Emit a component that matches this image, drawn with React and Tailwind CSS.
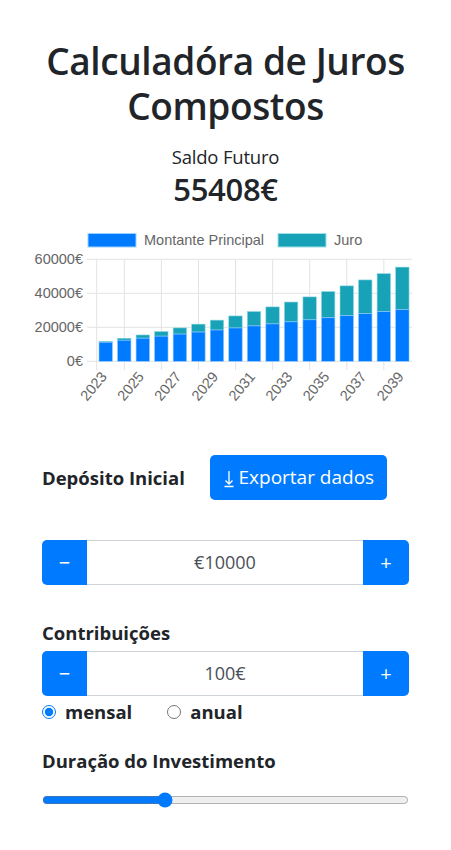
import { useState } from "react";

const BLUE = "#007bff";
const TEAL = "#17a2b8";

function yearData(years) {
  const i = 0.05 / 12;
  const rows = [];
  for (let n = 1; n <= years; n++) {
    const g = Math.pow(1 + i, 12 * n);
    const total = 10000 * g + (100 * (g - 1)) / i;
    rows.push({ year: 2022 + n, principal: 10000 + 1200 * n, total });
  }
  return rows;
}

function Chart({ rows }) {
  const y0 = 361.3;
  const pxPer = 102 / 60000;
  const x0 = 105.7;
  const step = 18.54;
  const bw = 13.4;
  const grid = [0, 20000, 40000, 60000];
  return (
    <svg width="451" height="192" viewBox="0 228 451 192" className="block -mx-[42px]">
      {/* legend */}
      <rect x="88" y="233.5" width="48" height="13.5" fill={BLUE} stroke="#9fd0ff" strokeWidth="1" />
      <text x="144" y="245" fontSize="14.5" fill="#666" fontFamily="'Liberation Sans', Arial, sans-serif">
        Montante Principal
      </text>
      <rect x="278" y="233.5" width="48" height="13.5" fill={TEAL} stroke="#9fe0ea" strokeWidth="1" />
      <text x="334" y="245" fontSize="14.5" fill="#666" fontFamily="'Liberation Sans', Arial, sans-serif">
        Juro
      </text>

      {/* grid */}
      {grid.map((v) => {
        const y = y0 - v * pxPer;
        return (
          <g key={v}>
            <line x1="87" x2="412" y1={y} y2={y} stroke="#e3e3e3" />
            <text
              x="83"
              y={y + 5}
              textAnchor="end"
              fontSize="14.5"
              fill="#666"
              fontFamily="'Liberation Sans', Arial, sans-serif"
            >
              {v}€
            </text>
          </g>
        );
      })}
      <line x1="96.7" x2="96.7" y1="259.3" y2="370" stroke="#e3e3e3" />
      {[0, 1, 2, 3, 4, 5, 6, 7].map((k) => (
        <line key={k} x1={124.3 + 37.08 * k} x2={124.3 + 37.08 * k} y1="259.3" y2="370" stroke="#e3e3e3" />
      ))}

      {/* bars */}
      {rows.map((r, idx) => {
        const cx = x0 + step * idx;
        const hp = r.principal * pxPer;
        const ht = r.total * pxPer;
        return (
          <g key={r.year}>
            <rect x={cx - bw / 2} y={y0 - ht} width={bw} height={ht - hp} fill={TEAL} stroke="#8fd6e2" strokeWidth="0.6" />
            <rect x={cx - bw / 2} y={y0 - hp} width={bw} height={hp} fill={BLUE} stroke="#8cc6ff" strokeWidth="0.6" />
          </g>
        );
      })}

      {/* x labels */}
      {rows
        .filter((_, idx) => idx % 2 === 0)
        .map((r, k) => {
          const tx = x0 + 2 * step * k + 2;
          const ty = 377;
          return (
            <text
              key={r.year}
              x={tx}
              y={ty}
              textAnchor="end"
              fontSize="14.5"
              fill="#666"
              fontFamily="'Liberation Sans', Arial, sans-serif"
              transform={`rotate(-50 ${tx} ${ty})`}
            >
              {r.year}
            </text>
          );
        })}
    </svg>
  );
}

function Stepper({ value, onMinus, onPlus }) {
  return (
    <div className="flex h-[45px] w-full">
      <button
        type="button"
        onClick={onMinus}
        className="flex w-[45px] items-center justify-center rounded-l-[5px] bg-[#007bff] text-[20px] text-white"
      >
        −
      </button>
      <div className="flex flex-1 items-center justify-center border-y border-[#ced4da] bg-white text-[18px] text-[#495057]">
        {value}
      </div>
      <button
        type="button"
        onClick={onPlus}
        className="flex w-[46px] items-center justify-center rounded-r-[5px] bg-[#007bff] text-[20px] text-white"
      >
        +
      </button>
    </div>
  );
}

export default function App() {
  const [deposit, setDeposit] = useState(10000);
  const [contrib, setContrib] = useState(100);
  const [freq, setFreq] = useState("mensal");
  const [years, setYears] = useState(17);
  const rows = yearData(years);

  return (
    <div className="min-h-screen bg-white font-['Open_Sans','Noto_Sans',sans-serif] text-[#212529]">
      <div className="px-[42px] pt-[38px]">
        <h1 className="text-center text-[37px] leading-[45px] font-semibold tracking-[-0.4px]">
          Calculadóra de Juros Compostos
        </h1>
        <p className="mt-[15px] text-center text-[18.5px] leading-[27px] tracking-[-0.2px]">Saldo Futuro</p>
        <p className="text-center text-[31px] leading-[38px] font-semibold tracking-[-0.3px]">55408€</p>

        <div className="mt-[20px]">
          <Chart rows={rows} />
        </div>

        <div className="mt-[35px] flex h-[45px] items-center gap-[25px]">
          <span className="text-[18.5px] font-bold">Depósito Inicial</span>
          <button
            type="button"
            className="flex h-[45px] w-[177px] items-center justify-center gap-[4px] rounded-[5px] bg-[#007bff] text-[19px] text-white"
          >
            <svg width="12" height="20" viewBox="0 0 12 20" fill="none" stroke="white" strokeWidth="1.3">
              <path d="M6 3v13M2.5 12.5L6 16l3.5-3.5M1.5 18.5h9" />
            </svg>
            Exportar dados
          </button>
        </div>

        <div className="mt-[40px]">
          <Stepper
            value={`€${deposit}`}
            onMinus={() => setDeposit((d) => Math.max(0, d - 1000))}
            onPlus={() => setDeposit((d) => d + 1000)}
          />
        </div>

        <div className="mt-[34px] text-[18.5px] font-bold leading-[27px]">Contribuições</div>
        <div className="mt-[5px]">
          <Stepper
            value={`${contrib}€`}
            onMinus={() => setContrib((c) => Math.max(0, c - 10))}
            onPlus={() => setContrib((c) => c + 10)}
          />
        </div>
        <div className="mt-[2px] flex h-[27px] items-center">
          <label className="flex items-center gap-[9px]">
            <input
              type="radio"
              name="freq"
              checked={freq === "mensal"}
              onChange={() => setFreq("mensal")}
              className="m-0 h-[14px] w-[14px] accent-[#007bff]"
            />
            <span className="text-[18.5px] font-bold">mensal</span>
          </label>
          <label className="ml-[35px] flex items-center gap-[9px]">
            <input
              type="radio"
              name="freq"
              checked={freq === "anual"}
              onChange={() => setFreq("anual")}
              className="m-0 h-[14px] w-[14px] accent-[#007bff]"
            />
            <span className="text-[18.5px] font-bold">anual</span>
          </label>
        </div>

        <div className="mt-[22px] text-[18.5px] font-bold leading-[27px]">Duração do Investimento</div>
        <div className="mt-[18px]">
          <input
            type="range"
            min="1"
            max="50"
            value={years}
            onChange={(e) => setYears(Number(e.target.value))}
            className="m-0 block w-full accent-[#007bff]"
          />
        </div>
      </div>
    </div>
  );
}
